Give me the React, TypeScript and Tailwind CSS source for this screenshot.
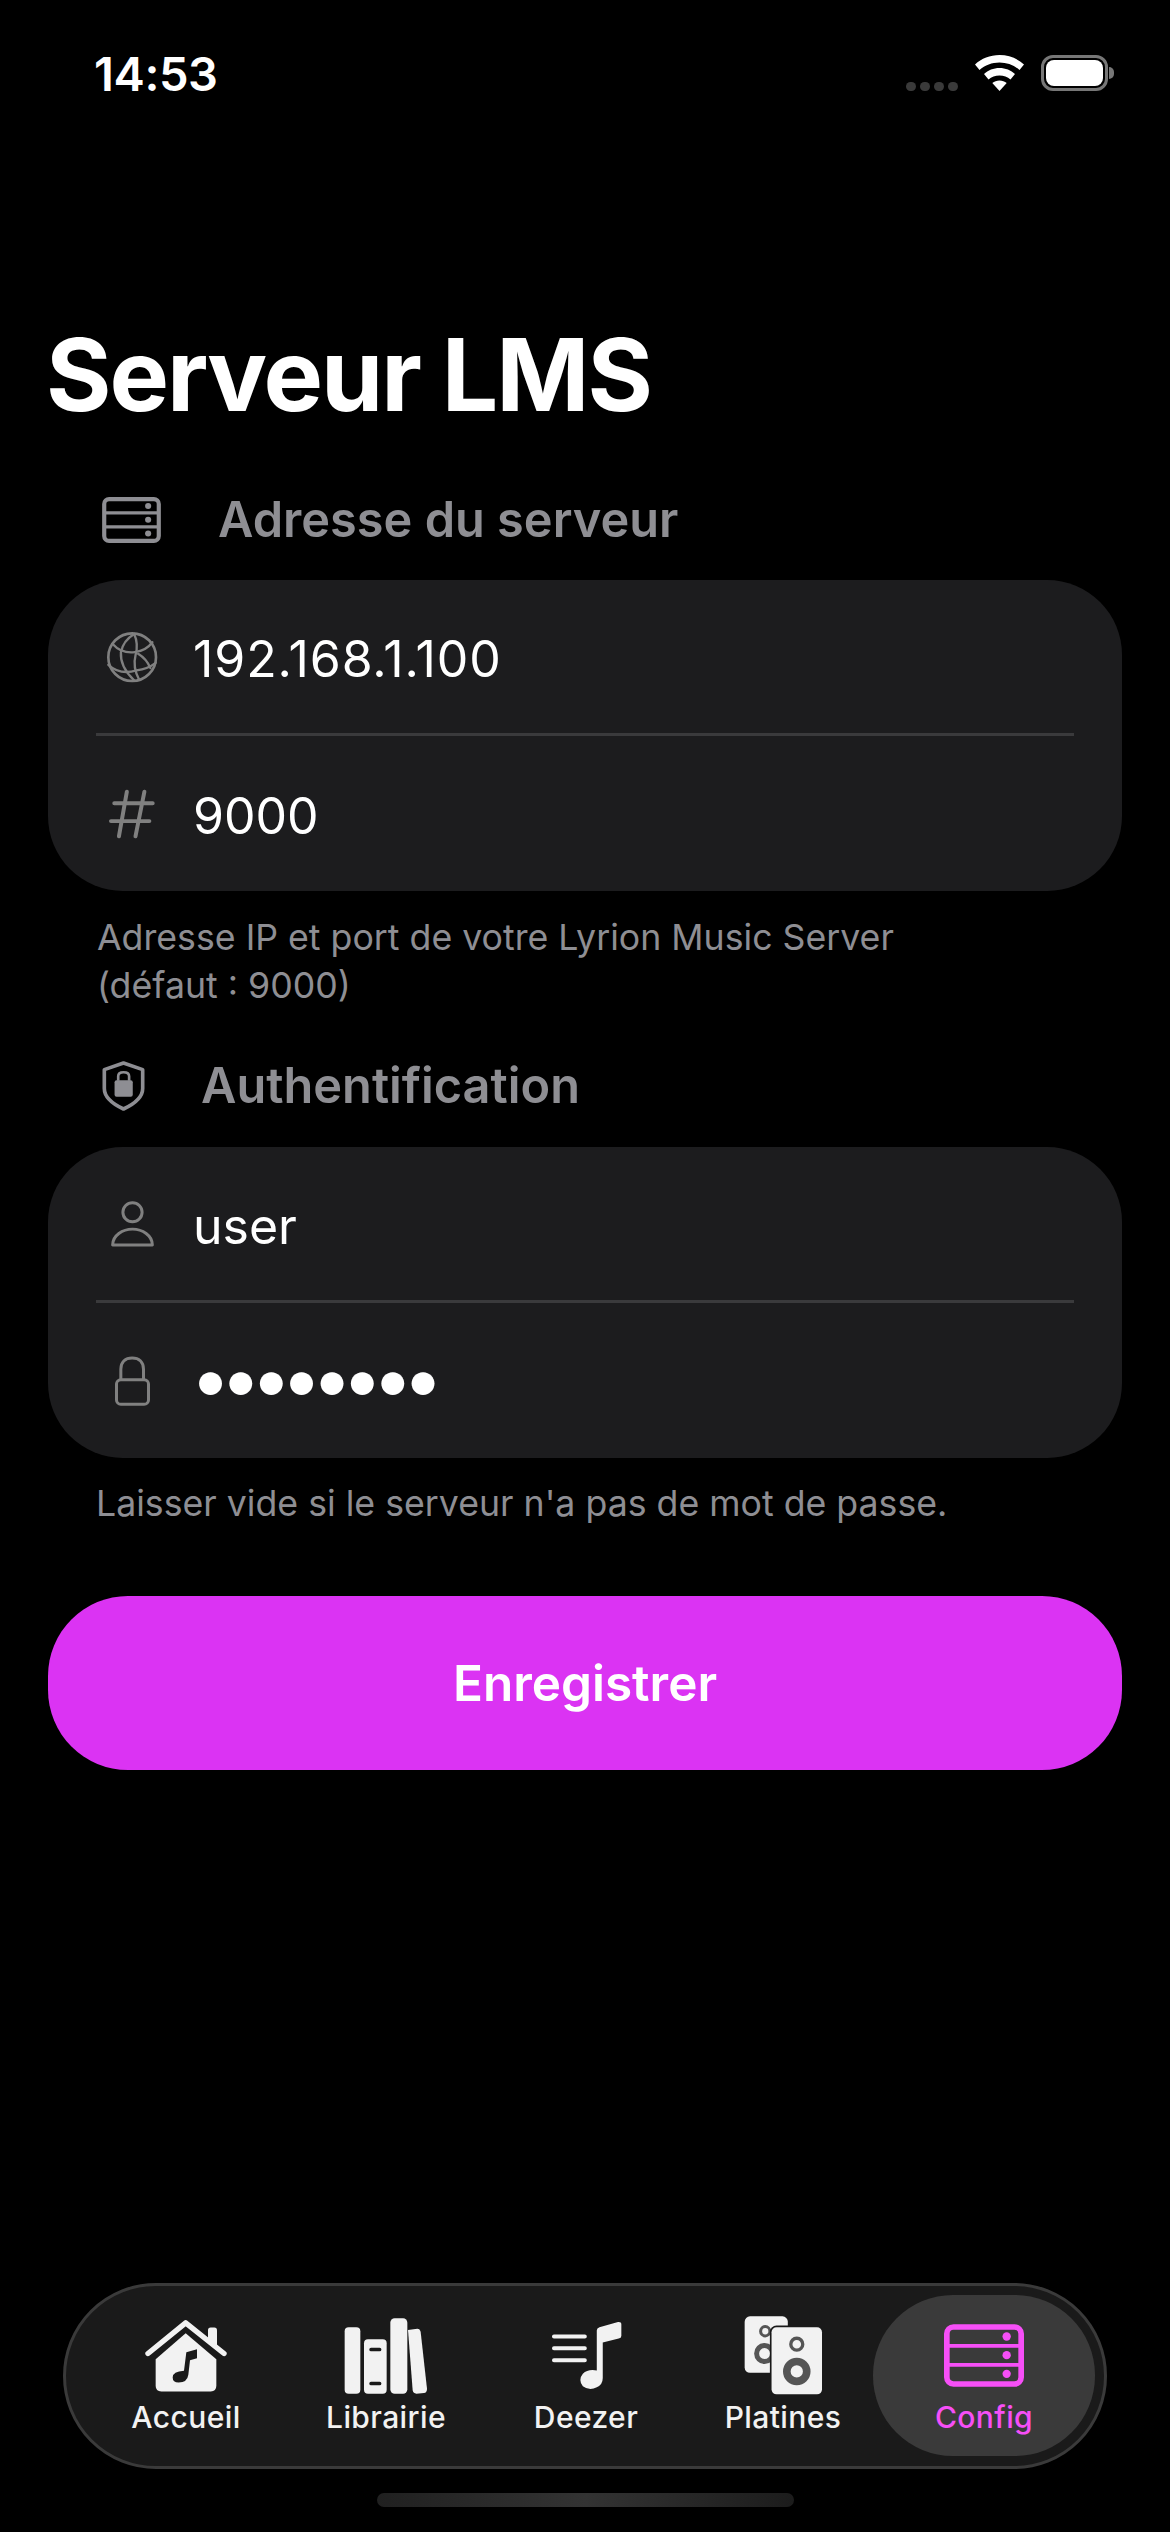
import React from "react";

function ServerIcon({ className, inner = 11 }: { className: string; inner?: number }) {
  return (
    <svg viewBox="0 0 240 188" className={className} fill="none" stroke="currentColor">
      <rect x="8.5" y="8.5" width="223" height="171" rx="20" strokeWidth="17" />
      <path d="M10 65H230M10 122H230" strokeWidth={inner} />
      <circle cx="188" cy="37" r="12.5" fill="currentColor" stroke="none" />
      <circle cx="188" cy="93" r="12.5" fill="currentColor" stroke="none" />
      <circle cx="188" cy="149" r="12.5" fill="currentColor" stroke="none" />
    </svg>
  );
}

function GlobeIcon() {
  return (
    <svg viewBox="198 456 157 157" className="w-[52px] h-[52px] text-[#808080]" fill="none" stroke="currentColor" strokeWidth="7" strokeLinecap="round">
      <circle cx="277" cy="535" r="72" strokeWidth="8" />
      <path d="M283 465Q250 485 243 520Q240 565 283 605" />
      <path d="M283 465Q297 495 287 530Q278 565 298 603" />
      <path d="M218 495Q245 525 285 520Q320 515 338 490" />
      <path d="M205 558Q240 590 290 575Q325 570 348 552" />
      <path d="M295 525Q320 540 332 568" />
    </svg>
  );
}

function HashIcon() {
  return (
    <svg viewBox="205 928 145 155" className="w-[48px] h-[52px] text-[#808080]" fill="none" stroke="currentColor" strokeWidth="12" strokeLinecap="round">
      <path d="M262 938L238 1073M315 938L288 1073M224 973H340M214 1027H330" />
    </svg>
  );
}

function ShieldIcon() {
  return (
    <svg viewBox="185 65 130 155" className="w-[43px] h-[52px] text-[#8e8e93]" fill="none" stroke="currentColor">
      <path d="M250 73L308 93V150Q308 185 250 212Q192 185 192 150V93Z" strokeWidth="11" strokeLinejoin="round" />
      <rect x="223" y="125" width="55" height="50" rx="6" fill="currentColor" stroke="none" />
      <path d="M234 127V113Q234 101 250 101Q267 101 267 113V127" strokeWidth="8" />
    </svg>
  );
}

function PersonIcon() {
  return (
    <svg viewBox="205 485 140 145" className="w-[47px] h-[48px] text-[#808080]" fill="none" stroke="currentColor" strokeWidth="9" strokeLinejoin="round">
      <circle cx="275" cy="522" r="29" />
      <path d="M215 621C215 592 245 573 275 573C305 573 335 592 335 621Z" />
    </svg>
  );
}

function LockIcon() {
  return (
    <svg viewBox="222 950 110 150" className="w-[37px] h-[50px] text-[#808080]" fill="none" stroke="currentColor" strokeWidth="9" strokeLinejoin="round">
      <rect x="229" y="1021" width="96" height="74" rx="13" />
      <path d="M242 1021V990C242 968 256 956 276 956C296 956 310 968 310 990V1021" />
    </svg>
  );
}

function HomeIcon() {
  return (
    <svg viewBox="278 142 252 224" className="w-[84px] h-[75px]" fill="none">
      <path d="M470 178Q470 170 478 170H489Q497 170 497 178V225L470 205Z" fill="#f2f2f2" />
      <path d="M290 248L403 156L518 248" stroke="#f2f2f2" strokeWidth="16" strokeLinecap="round" strokeLinejoin="round" />
      <path d="M313 265L403 187L495 265V345Q495 362 478 362H330Q313 362 313 345Z" fill="#f2f2f2" />
      <path d="M405 244L437 235V262L416 268L411 312Q408 335 382 335Q364 335 364 320Q364 302 398 300Z" fill="#1a1a1a" />
    </svg>
  );
}

function LibraryIcon() {
  return (
    <svg viewBox="875 135 258 234" className="w-[86px] h-[78px]" fill="none">
      <rect x="880" y="166" width="47" height="199" rx="12" fill="#f2f2f2" />
      <rect x="938" y="202" width="68" height="163" rx="12" fill="#f2f2f2" />
      <rect x="954" y="227" width="36" height="11" rx="5" fill="#1a1a1a" />
      <rect x="954" y="329" width="36" height="11" rx="5" fill="#1a1a1a" />
      <path d="M1070 174L1098 170Q1106 170 1108 180L1127 350Q1127 362 1118 363L1095 365Q1086 365 1084 355Z" fill="#f2f2f2" />
      <rect x="1017" y="139" width="51" height="226" rx="13" fill="#f2f2f2" />
    </svg>
  );
}

function DeezerIcon() {
  return (
    <svg viewBox="232 150 218 214" className="w-[73px] h-[71px]" fill="none">
      <path d="M243 200H336M243 235H336M243 271H336" stroke="#f2f2f2" strokeWidth="12" strokeLinecap="round" />
      <path d="M372 182Q372 174 380 172L436 156Q446 155 446 163V198Q446 204 438 206L390 218V325Q390 345 372 353Q350 365 330 350Q315 330 330 312Q345 297 372 302Z" fill="#f2f2f2" />
    </svg>
  );
}

function SpeakersIcon() {
  return (
    <svg viewBox="822 134 242 244" className="w-[81px] h-[81px]" fill="none">
      <rect x="826" y="138" width="130" height="170" rx="16" fill="#f2f2f2" />
      <circle cx="888" cy="183" r="14" stroke="#555" strokeWidth="9" />
      <circle cx="886" cy="250" r="24" stroke="#555" strokeWidth="15" />
      <rect x="902" y="166" width="162" height="212" rx="20" fill="#1a1a1a" />
      <rect x="907" y="171" width="152" height="202" rx="15" fill="#f2f2f2" />
      <circle cx="983" cy="222" r="18" stroke="#555" strokeWidth="10" />
      <circle cx="983" cy="304" r="30" stroke="#555" strokeWidth="23" />
    </svg>
  );
}

function WifiIcon() {
  return (
    <svg viewBox="0 0 49 36" className="w-[49px] h-[36px]" fill="#fff">
      <path d="M24.5 0C34 0 42.5 3.5 49 9.5L44.5 15C39 10.2 32 7.5 24.5 7.5S10 10.2 4.500 15L0 9.500C6.500 3.500 15 0 24.500 0Z" />
      <path d="M24.5 13C30.500 13 36 15.200 40 19L35.500 24.500C32.500 22 28.700 20.500 24.500 20.500S16.500 22 13.500 24.500L9 19C13 15.200 18.500 13 24.500 13Z" />
      <path d="M24.5 25.500C27.200 25.500 29.700 26.400 31.700 28L24.500 36L17.300 28C19.300 26.400 21.800 25.500 24.500 25.500Z" />
    </svg>
  );
}

function Row({ icon, children, tall }: { icon: React.ReactNode; children: React.ReactNode; tall?: boolean }) {
  return (
    <div className={`${tall ? "h-[155px]" : "h-[153px]"} flex items-center pl-[51px]`}>
      <div className="w-[66px] flex justify-center">{icon}</div>
      <div className="ml-[28px] pt-[5px] text-[50px] leading-none text-white">{children}</div>
    </div>
  );
}

function Tab({ icon, label, active, className }: { icon: React.ReactNode; label: string; active?: boolean; className: string }) {
  return (
    <div className={`w-[222px] h-[161px] shrink-0 rounded-[80px] flex flex-col items-center ${active ? "bg-[#3a3a3a] text-[#f64ff7]" : "text-[#f2f2f2]"} ${className}`}>
      <div className="h-[103px] pt-[18px] flex items-center justify-center">{icon}</div>
      <div className="text-[30px] leading-[38px] font-medium tracking-[0.4px]">{label}</div>
    </div>
  );
}

export default function App() {
  return (
    <div className="w-[1170px] h-[2532px] bg-black flex flex-col overflow-hidden font-['Inter',sans-serif]">
      <div className="h-[110px] shrink-0 flex items-start justify-between pl-[94px] pr-[56px] pt-[55px]">
        <div className="text-[47px] leading-[38px] font-semibold text-white tracking-[-0.4px]">14:53</div>
        <div className="flex items-start">
          <div className="flex gap-[4px] mt-[27px] mr-[17px]">
            <div className="w-[10px] h-[9px] rounded-full bg-[#3a3a3a]" />
            <div className="w-[10px] h-[9px] rounded-full bg-[#3a3a3a]" />
            <div className="w-[10px] h-[9px] rounded-full bg-[#3a3a3a]" />
            <div className="w-[10px] h-[9px] rounded-full bg-[#3a3a3a]" />
          </div>
          <WifiIcon />
          <div className="ml-[17px] flex items-center h-[36px]">
            <div className="w-[67px] h-[36px] rounded-[12px] border-[3px] border-[#777] p-[2px]">
              <div className="w-full h-full rounded-[8px] bg-white" />
            </div>
            <div className="w-[5px] h-[12px] rounded-r-full bg-[#777] ml-[1px]" />
          </div>
        </div>
      </div>

      <main className="flex-1 px-[48px] pt-[205px]">
        <h1 className="h-[120px] -ml-[2px] text-[100px] leading-[120px] font-bold text-white tracking-[-2px]">Serveur LMS</h1>

        <div className="mt-[50px] h-[70px] flex items-center pl-[54px]">
          <ServerIcon inner={14} className="w-[59px] h-[46px] text-[#8e8e93]" />
          <div className="ml-[57px] text-[48.700px] leading-none font-semibold text-[#8e8e93]">Adresse du serveur</div>
        </div>
        <div className="mt-[25px] rounded-[75px] bg-[#1c1c1e]">
          <Row icon={<GlobeIcon />}><span className="tracking-[0.900px]">192.168.1.100</span></Row>
          <div className="ml-[48px] mr-[48px] h-[3px] bg-[#3a3a3c]" />
          <Row tall icon={<HashIcon />}>9000</Row>
        </div>
        <p className="mt-[22px] pl-[49px] text-[35.700px] leading-[48px] text-[#8e8e93] w-[1000px]">
          Adresse IP et port de votre Lyrion Music Server
          <br />
          (défaut : 9000)
        </p>

        <div className="mt-[42px] h-[70px] flex items-center pl-[54px]">
          <ShieldIcon />
          <div className="ml-[56px] text-[48.700px] leading-none font-semibold text-[#8e8e93]">Authentification</div>
        </div>
        <div className="mt-[26px] rounded-[75px] bg-[#1c1c1e]">
          <Row icon={<PersonIcon />}>user</Row>
          <div className="ml-[48px] mr-[48px] h-[3px] bg-[#3a3a3c]" />
          <Row tall icon={<LockIcon />}>
            <span className="block -mt-[10px] -ml-[3px] text-[73px] leading-none tracking-[-10.700px]">••••••••</span>
          </Row>
        </div>
        <p className="mt-[21px] pl-[48px] text-[35.700px] leading-[48px] text-[#8e8e93]">Laisser vide si le serveur n'a pas de mot de passe.</p>

        <button className="mt-[69px] w-full h-[174px] rounded-[80px] bg-[#db33f3] text-white text-[49.500px] font-semibold">Enregistrer</button>
      </main>

      <nav className="mx-[63px] h-[186px] shrink-0 rounded-[93px] bg-[#1a1a1a] border-[3px] border-[#3a3a3a] pl-[9px] pt-[9px] flex items-start">
        <Tab icon={<HomeIcon />} label="Accueil" className="-mr-[22px]" />
        <Tab icon={<LibraryIcon />} label="Librairie" className="-mr-[22px]" />
        <Tab icon={<DeezerIcon />} label="Deezer" className="-mr-[25px]" />
        <Tab icon={<SpeakersIcon />} label="Platines" className="-mr-[21px]" />
        <Tab icon={<ServerIcon className="w-[80px] h-[63px]" />} label="Config" active className="" />
      </nav>
      <div className="mt-[24px] mb-[25px] mx-auto w-[417px] h-[14px] shrink-0 rounded-full bg-gradient-to-r from-[#202020] via-[#333333] to-[#1c1c1c]" />
    </div>
  );
}
